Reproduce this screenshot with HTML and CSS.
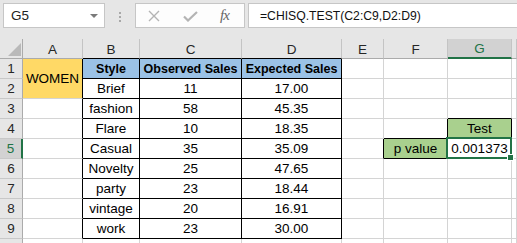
FILE: index.html
```html
<!DOCTYPE html>
<html>
<head>
<meta charset="utf-8">
<link rel="stylesheet" href="styles.css">
</head>
<body>
<div class="app">
  <div class="toolbar">
    <div class="namebox"><span class="nb-text">G5</span><span class="nb-arrow"></span></div>
    <div class="grip"><i></i><i></i><i></i></div>
    <div class="fbtns">
      <svg class="ic-x" width="12" height="12" viewBox="0 0 12 12"><path d="M1 1L11 11M11 1L1 11" stroke="#b4b4b4" stroke-width="1.4" fill="none"/></svg>
      <svg class="ic-ok" width="15" height="11" viewBox="0 0 15 11"><path d="M1 5.5L5 9.5L14 1" stroke="#b4b4b4" stroke-width="2.2" fill="none"/></svg>
      <span class="fx">fx</span>
    </div>
    <div class="fbar">=CHISQ.TEST(C2:C9,D2:D9)</div>
  </div>
  <div class="sheet">
    <div class="corner"><span class="tri"></span></div>
    <div class="ch">A</div><div class="ch">B</div><div class="ch">C</div><div class="ch bk">D</div><div class="ch">E</div><div class="ch">F</div><div class="ch csel">G</div><div class="ch"></div>

    <div class="rh">1</div>
    <div class="c yellow br span2">WOMEN</div>
    <div class="c blue bold br bb">Style</div><div class="c blue bold br bb">Observed Sales</div><div class="c blue bold br bb">Expected Sales</div>
    <div class="c"></div><div class="c"></div><div class="c"></div><div class="c"></div>

    <div class="rh">2</div>
    <div class="c br bb">Brief</div><div class="c br bb">11</div><div class="c br bb">17.00</div>
    <div class="c"></div><div class="c"></div><div class="c"></div><div class="c"></div>

    <div class="rh">3</div><div class="c br"></div>
    <div class="c br bb">fashion</div><div class="c br bb">58</div><div class="c br bb">45.35</div>
    <div class="c"></div><div class="c"></div><div class="c bb"></div><div class="c"></div>

    <div class="rh">4</div><div class="c br"></div>
    <div class="c br bb">Flare</div><div class="c br bb">10</div><div class="c br bb">18.35</div>
    <div class="c"></div><div class="c br bb"></div><div class="c green br bb">Test</div><div class="c"></div>

    <div class="rh rsel">5</div><div class="c br"></div>
    <div class="c br bb">Casual</div><div class="c br bb">35</div><div class="c br bb">35.09</div>
    <div class="c br"></div><div class="c green br bb">p value</div><div class="c br bb active">0.001373<span class="handle"></span></div><div class="c"></div>

    <div class="rh">6</div><div class="c br"></div>
    <div class="c br bb">Novelty</div><div class="c br bb">25</div><div class="c br bb">47.65</div>
    <div class="c"></div><div class="c"></div><div class="c"></div><div class="c"></div>

    <div class="rh">7</div><div class="c br"></div>
    <div class="c br bb">party</div><div class="c br bb">23</div><div class="c br bb">18.44</div>
    <div class="c"></div><div class="c"></div><div class="c"></div><div class="c"></div>

    <div class="rh">8</div><div class="c br"></div>
    <div class="c br bb">vintage</div><div class="c br bb">20</div><div class="c br bb">16.91</div>
    <div class="c"></div><div class="c"></div><div class="c"></div><div class="c"></div>

    <div class="rh">9</div><div class="c br"></div>
    <div class="c br bb">work</div><div class="c br bb">23</div><div class="c br bb">30.00</div>
    <div class="c"></div><div class="c"></div><div class="c"></div><div class="c"></div>

    <div class="rh"></div><div class="c"></div>
    <div class="c"></div><div class="c"></div><div class="c"></div>
    <div class="c"></div><div class="c"></div><div class="c"></div><div class="c"></div>
  </div>
</div>
</body>
</html>
```
FILE: styles.css
```css
html, body {
  margin: 0;
  padding: 0;
  overflow: hidden;
  background: #ffffff;
}
.app {
  width: 517px;
  height: 243px;
  overflow: hidden;
  font-family: "Liberation Sans", Arial, sans-serif;
  color: #000;
}
.toolbar {
  height: 39px;
  box-sizing: border-box;
  background: #e6e6e6;
  display: flex;
  align-items: flex-start;
  padding: 3px 0 0 3px;
}
.namebox {
  width: 102px;
  height: 25px;
  box-sizing: border-box;
  background: #fff;
  border: 1px solid #c6c6c6;
  display: flex;
  align-items: center;
  justify-content: space-between;
  padding: 0 6px 0 7px;
  font-size: 13.5px;
  color: #222;
}
.nb-arrow {
  width: 0;
  height: 0;
  border-left: 4px solid transparent;
  border-right: 4px solid transparent;
  border-top: 4px solid #7a7a7a;
}
.grip {
  margin: 9px 0 0 14px;
  width: 3px;
  display: flex;
  flex-direction: column;
  gap: 2px;
}
.grip i {
  display: block;
  width: 2px;
  height: 2px;
  background: #a8a8a8;
}
.fbtns {
  margin-left: 13px;
  width: 110px;
  height: 25px;
  box-sizing: border-box;
  background: #fdfdfd;
  border: 1px solid #c6c6c6;
  display: flex;
  align-items: center;
  padding-left: 12px;
}
.ic-x { margin-top: 1px; }
.ic-ok { margin-left: 23px; margin-top: 1px; }
.fx {
  margin-left: 22px;
  font-family: "Liberation Serif", "Times New Roman", serif;
  font-style: italic;
  font-size: 15px;
  color: #666;
  letter-spacing: -1px;
}
.fbar {
  margin-left: 3px;
  flex: 1;
  margin-right: -2px;
  height: 25px;
  box-sizing: border-box;
  background: #fff;
  border: 1px solid #c6c6c6;
  display: flex;
  align-items: center;
  padding-left: 11px;
  font-size: 12.2px;
  color: #111;
}
.sheet {
  display: grid;
  grid-template-columns: 23px 60px 57px 102px 100px 42px 64px 64px 1fr;
  grid-auto-rows: 20px;
}
.sheet > div {
  box-sizing: border-box;
}
.corner {
  background: #e6e6e6;
  border-right: 1px solid #ababab;
  border-bottom: 1px solid #ababab;
  display: flex;
  align-items: flex-end;
  justify-content: flex-end;
  padding: 0 1px 2px 0;
}
.tri {
  width: 0;
  height: 0;
  border-left: 13px solid transparent;
  border-bottom: 13px solid #b9b9b9;
}
.ch {
  background: #e6e6e6;
  border-right: 1px solid #c4c4c4;
  border-bottom: 1px solid #ababab;
  display: flex;
  align-items: center;
  justify-content: center;
  font-size: 13.5px;
  color: #262626;
  padding-top: 1px;
}
.ch.bk { border-bottom-color: #000; }
.sheet .ch:nth-child(3), .sheet .ch:nth-child(4) { border-bottom-color: #000; }
.ch.csel {
  background: #d2d2d2;
  color: #217346;
  border-bottom: 2px solid #217346;
}
.rh {
  background: #e6e6e6;
  border-right: 1px solid #ababab;
  border-bottom: 1px solid #c8c8c8;
  display: flex;
  align-items: flex-end;
  justify-content: center;
  padding-bottom: 1px;
  line-height: 16px;
  font-size: 13.5px;
  color: #262626;
}
.rh.rsel {
  background: #d2d2d2;
  color: #217346;
  border-right: 2px solid #217346;
}
.c {
  border-right: 1px solid #d4d4d4;
  border-bottom: 1px solid #d4d4d4;
  display: flex;
  align-items: flex-end;
  justify-content: center;
  padding-bottom: 1px;
  line-height: 16px;
  font-size: 13.5px;
  white-space: nowrap;
}
.c.br { border-right-color: #000; }
.c.bb { border-bottom-color: #000; }
.span2 {
  grid-row: span 2;
  align-items: center;
  padding-bottom: 0;
}
.yellow { background: #ffd966; }
.blue { background: #9bc2e6; }
.green { background: #a9d08e; }
.bold {
  font-weight: bold;
  font-size: 12.5px;
}
.active {
  position: relative;
}
.active::after {
  content: "";
  position: absolute;
  top: -2px;
  left: -2px;
  right: -1px;
  bottom: -1px;
  border: 2px solid #217346;
}
.handle {
  position: absolute;
  right: -3px;
  bottom: -3px;
  width: 5px;
  height: 5px;
  background: #217346;
  border: 1px solid #fff;
  z-index: 2;
}
```
